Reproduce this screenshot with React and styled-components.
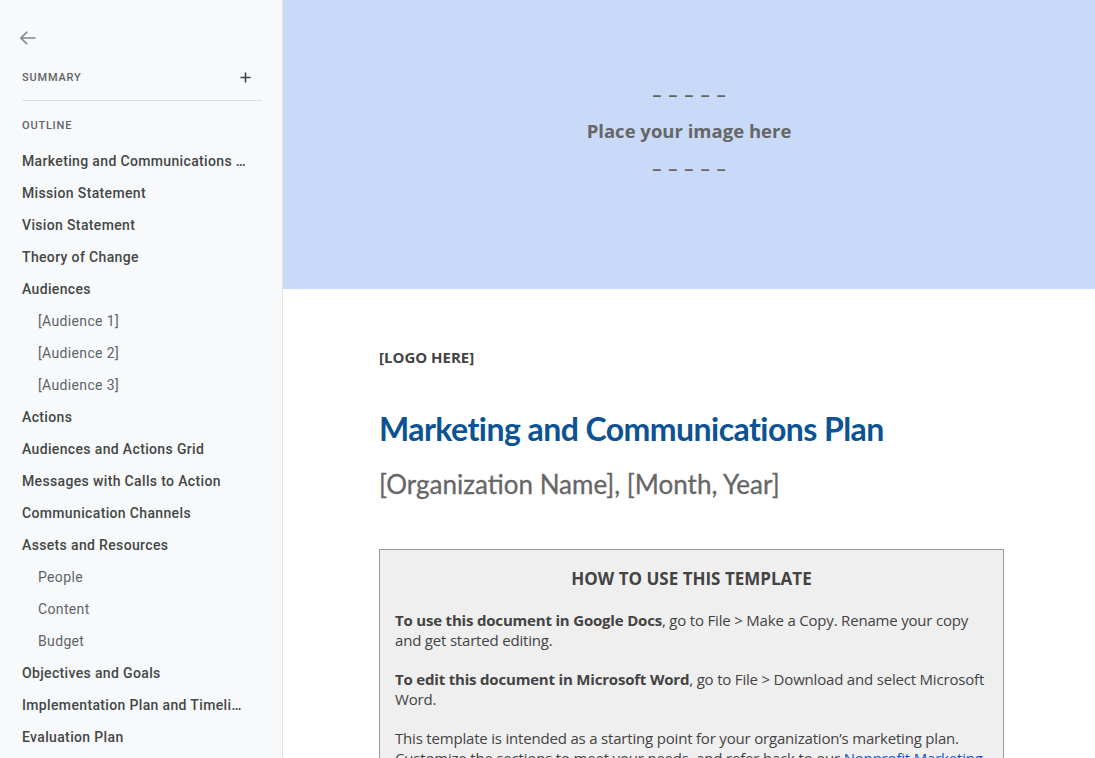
import React from 'react';
import styled, { createGlobalStyle } from 'styled-components';

const GlobalStyle = createGlobalStyle`
  html, body {
    margin: 0;
    padding: 0;
    height: 100%;
    overflow: hidden;
  }
  body {
    font-family: Roboto, 'Noto Sans', sans-serif;
  }
`;

const Layout = styled.div`
  display: flex;
  width: 1095px;
  height: 758px;
  overflow: hidden;
`;

const Sidebar = styled.aside`
  width: 283px;
  flex-shrink: 0;
  background: #f8f9fa;
  border-right: 1px solid #e3e4e6;
  padding: 26px 20px 0 22px;
  box-sizing: border-box;
  font-family: Roboto, 'Noto Sans', sans-serif;
`;

const BackButton = styled.button`
  display: flex;
  align-items: center;
  justify-content: center;
  width: 24px;
  height: 24px;
  margin-left: -6px;
  padding: 0;
  border: none;
  background: none;
  color: #80868b;
`;

const SectionHead = styled.div`
  display: flex;
  align-items: center;
  justify-content: space-between;
  height: 20px;
  margin-top: ${p => p.$top}px;
  font-size: 11px;
  font-weight: 500;
  letter-spacing: 0.8px;
  color: #5f6368;
`;

const PlusButton = styled.span`
  display: flex;
  color: #3c4043;
  margin-right: 11px;
`;

const Divider = styled.hr`
  border: none;
  border-top: 1px solid #dadce0;
  margin: 13px 0 0;
`;

const Outline = styled.ul`
  list-style: none;
  margin: 10px 0 0;
  padding: 0;
`;

const OutlineItem = styled.li`
  height: 32px;
  line-height: 32px;
  padding-left: ${p => (p.$sub ? 16 : 0)}px;
  font-size: 14px;
  font-weight: ${p => (p.$sub ? 400 : 500)};
  letter-spacing: 0.35px;
  color: ${p => (p.$sub ? '#5f6368' : '#444746')};
  white-space: nowrap;
  overflow: hidden;
  text-overflow: ellipsis;
  max-width: 224px;
  box-sizing: border-box;
`;

const Main = styled.main`
  flex: 1;
  background: #fff;
  overflow: hidden;
`;

const Banner = styled.div`
  height: 289px;
  background: #c9daf8;
  display: flex;
  flex-direction: column;
  align-items: center;
  justify-content: center;
  font-family: 'Open Sans', sans-serif;
  font-weight: 700;
  font-size: 18.5px;
  color: #666666;
  line-height: 37px;
  padding-bottom: 28px;
  box-sizing: border-box;
`;

const Dashes = styled.div`
  font-weight: 600;
  letter-spacing: 1px;
  margin-left: 1px;
`;

const Doc = styled.div`
  padding: 56px 91px 0 96px;
  font-family: 'Open Sans', sans-serif;
`;

const Logo = styled.div`
  font-size: 15px;
  font-weight: 700;
  color: #434343;
  line-height: 24px;
`;

const Title = styled.h1`
  margin: 38px 0 0;
  font-family: Lato, 'Open Sans', sans-serif;
  font-size: 32px;
  font-weight: 700;
  color: #0b5394;
  line-height: 44px;
  letter-spacing: -0.55px;
`;

const Subtitle = styled.h2`
  margin: 16px 0 0;
  font-family: Lato, 'Open Sans', sans-serif;
  font-size: 26px;
  font-weight: 400;
  color: #666666;
  line-height: 34px;
  -webkit-text-stroke: 0.3px #666666;
`;

const HowTo = styled.section`
  margin-top: 48px;
  width: 625px;
  box-sizing: border-box;
  background: #efefef;
  border: 1px solid #999999;
  border-bottom: none;
  padding: 15px 15px 20px;
  color: #434343;
`;

const HowToTitle = styled.h3`
  margin: 0;
  text-align: center;
  font-size: 17px;
  font-weight: 700;
  line-height: 28px;
`;

const Para = styled.p`
  margin: 17px 0 19px;
  font-size: 15px;
  line-height: 20px;
  letter-spacing: -0.19px;
  & + & {
    margin-top: 0;
  }
`;

const Link = styled.a`
  color: #1155cc;
  text-decoration: none;
`;

const outline = [
  { label: 'Marketing and Communications Plan' },
  { label: 'Mission Statement' },
  { label: 'Vision Statement' },
  { label: 'Theory of Change' },
  { label: 'Audiences' },
  { label: '[Audience 1]', sub: true },
  { label: '[Audience 2]', sub: true },
  { label: '[Audience 3]', sub: true },
  { label: 'Actions' },
  { label: 'Audiences and Actions Grid' },
  { label: 'Messages with Calls to Action' },
  { label: 'Communication Channels' },
  { label: 'Assets and Resources' },
  { label: 'People', sub: true },
  { label: 'Content', sub: true },
  { label: 'Budget', sub: true },
  { label: 'Objectives and Goals' },
  { label: 'Implementation Plan and Timeline' },
  { label: 'Evaluation Plan' },
];

const App = () => (
  <>
    <GlobalStyle />
    <Layout>
      <Sidebar>
        <BackButton aria-label="Back">
          <svg width="20" height="20" viewBox="0 0 24 24" fill="none" stroke="currentColor" strokeWidth="2">
            <path d="M21 12H3.5M11 4.5L3.5 12l7.5 7.5" />
          </svg>
        </BackButton>
        <SectionHead $top={17}>
          SUMMARY
          <PlusButton>
            <svg width="11" height="11" viewBox="0 0 12 12" stroke="currentColor" strokeWidth="1.7">
              <path d="M6 0.5v11M0.5 6h11" />
            </svg>
          </PlusButton>
        </SectionHead>
        <Divider />
        <SectionHead $top={14}>OUTLINE</SectionHead>
        <Outline>
          {outline.map(item => (
            <OutlineItem key={item.label} $sub={item.sub}>{item.label}</OutlineItem>
          ))}
        </Outline>
      </Sidebar>
      <Main>
        <Banner>
          <Dashes>– – – – –</Dashes>
          <div>Place your image here</div>
          <Dashes>– – – – –</Dashes>
        </Banner>
        <Doc>
          <Logo>[LOGO HERE]</Logo>
          <Title>Marketing and Communications Plan</Title>
          <Subtitle>[Organization Name], [Month, Year]</Subtitle>
          <HowTo>
            <HowToTitle>HOW TO USE THIS TEMPLATE</HowToTitle>
            <Para>
              <b>To use this document in Google Docs</b>, go to File &gt; Make a Copy. Rename your copy
              and get started editing.
            </Para>
            <Para>
              <b>To edit this document in Microsoft Word</b>, go to File &gt; Download and select Microsoft
              Word.
            </Para>
            <Para>
              This template is intended as a starting point for your organization’s marketing plan.
              Customize the sections to meet your needs, and refer back to our{' '}
              <Link href="#">Nonprofit Marketing Guide</Link> for more help.
            </Para>
          </HowTo>
        </Doc>
      </Main>
    </Layout>
  </>
);

export default App;
